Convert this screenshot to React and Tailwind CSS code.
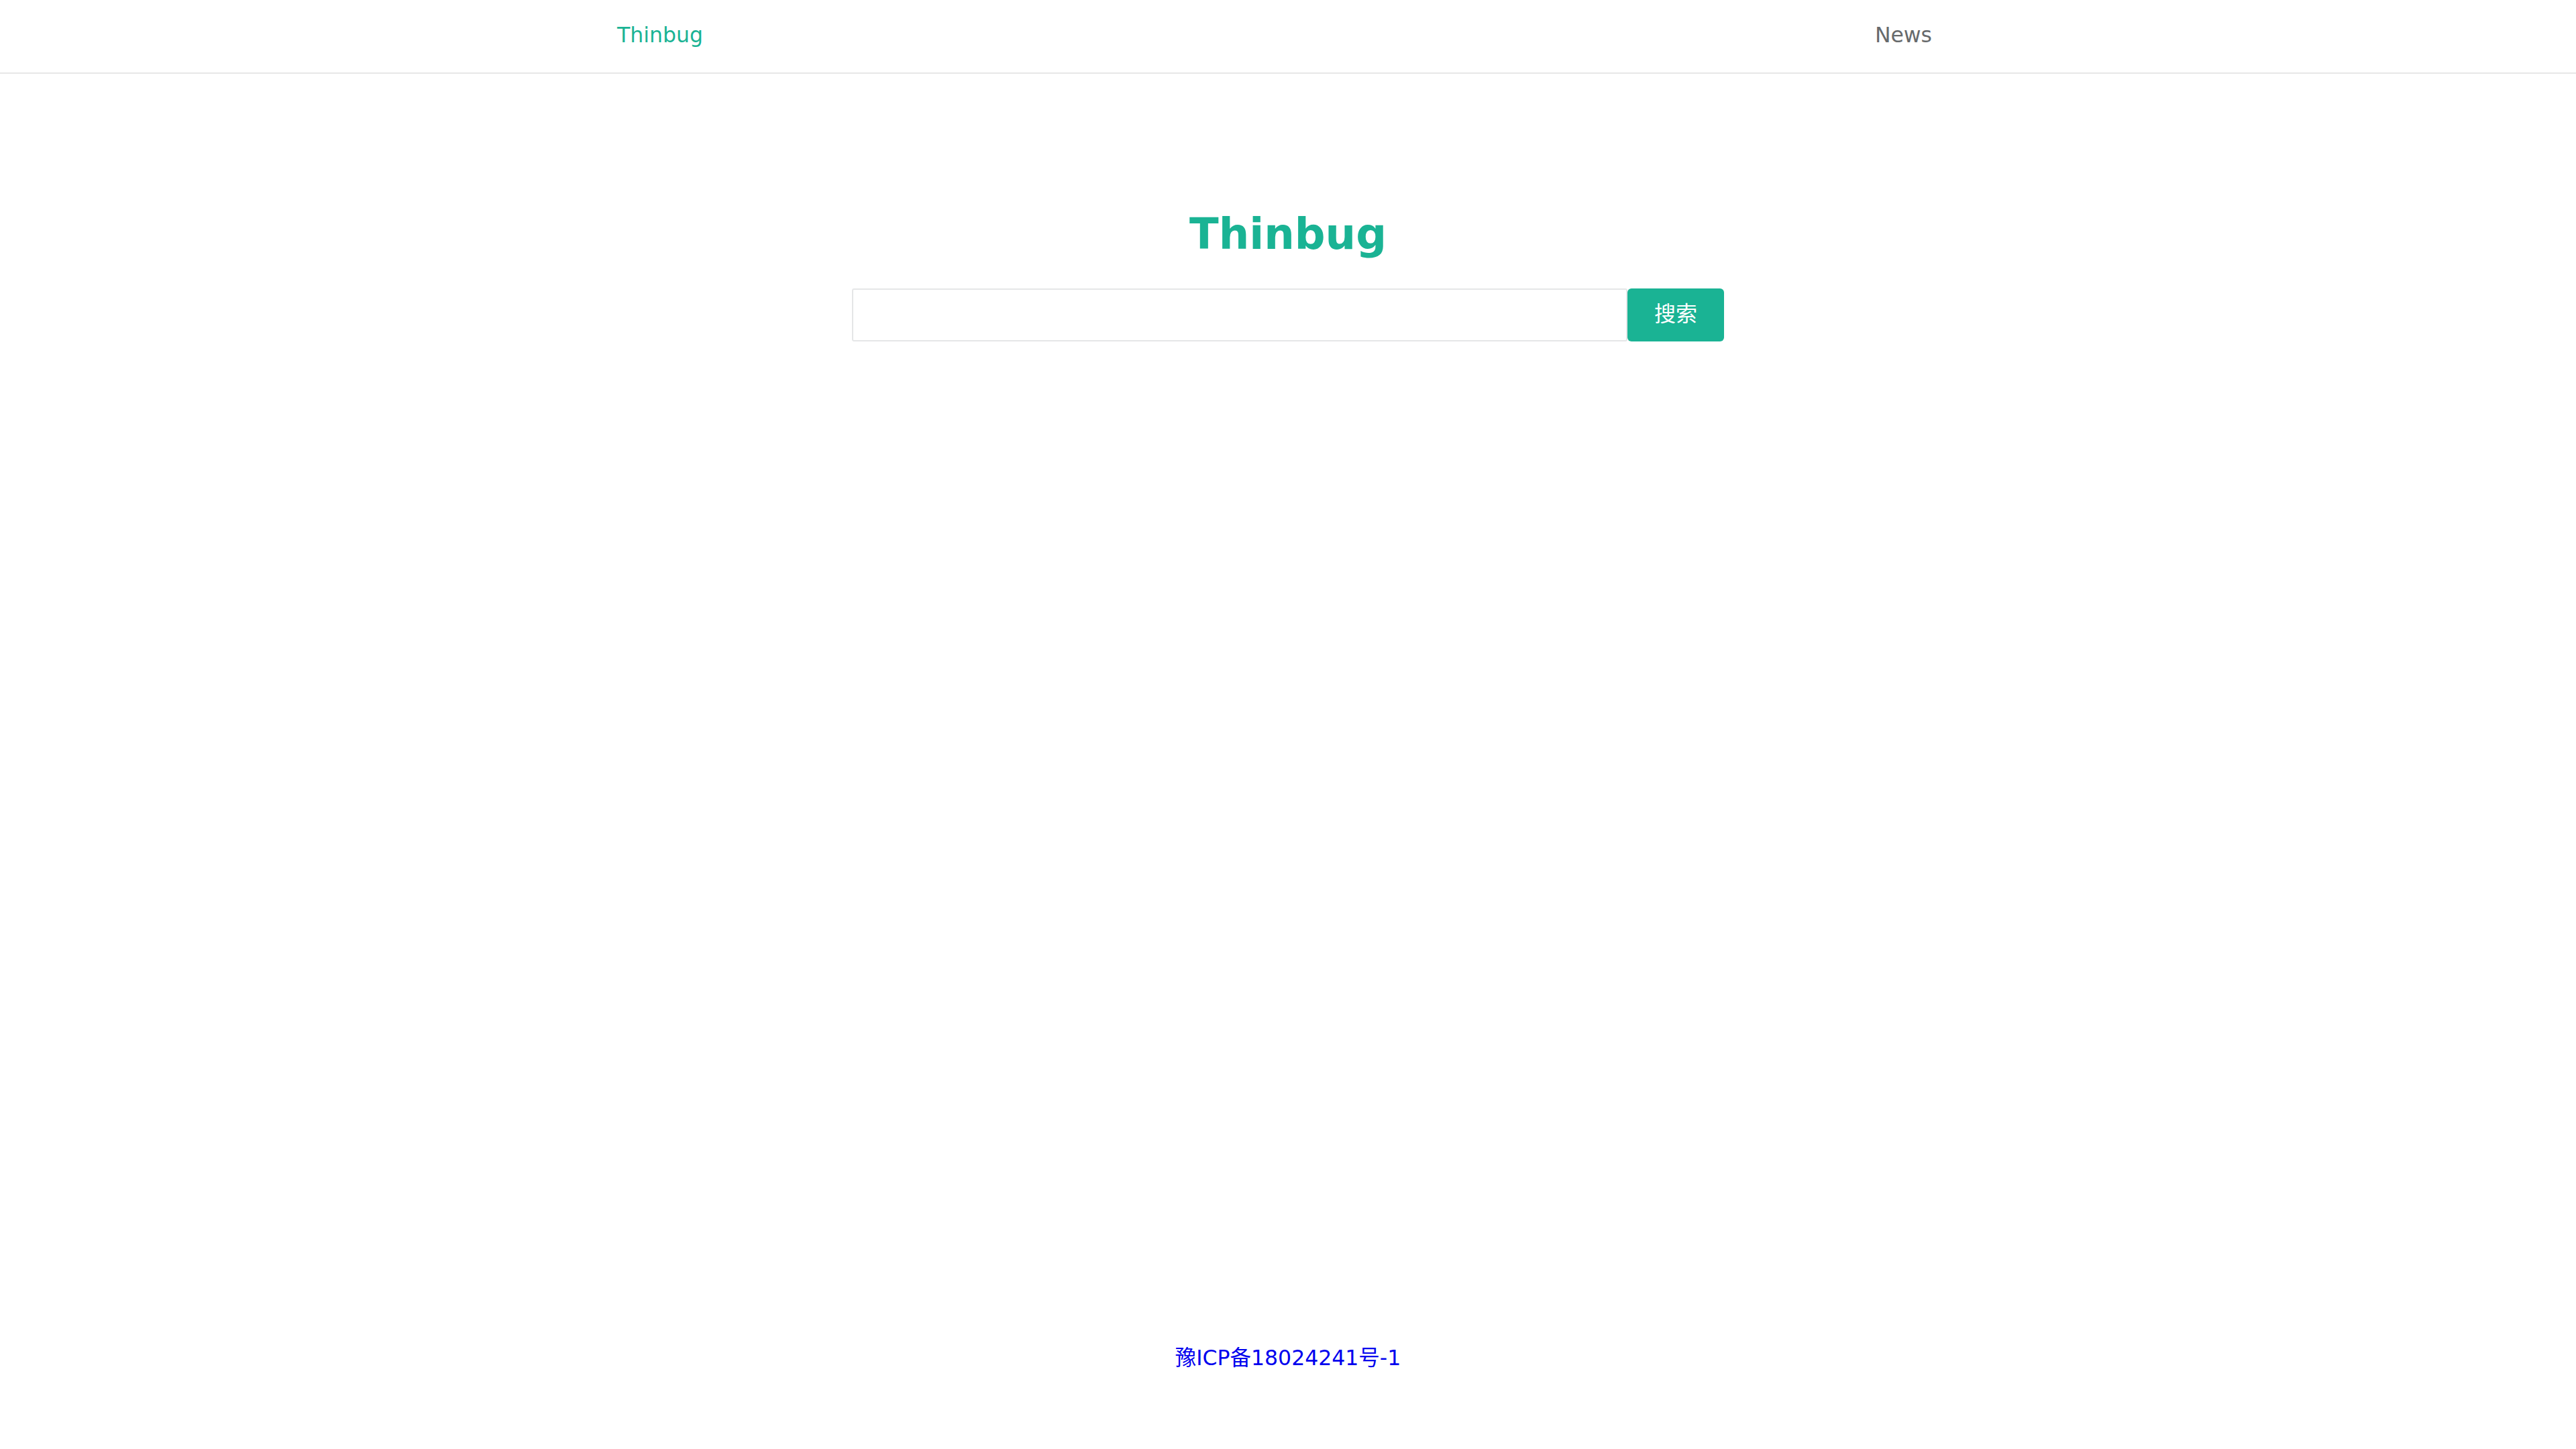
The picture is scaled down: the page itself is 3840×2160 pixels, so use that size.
import React from "react";

export default function App() {
  return (
    <div className="min-h-screen w-full bg-white flex flex-col font-['DejaVu_Sans','Noto_Sans_CJK_SC',sans-serif]">
      <header className="h-[110px] border-b-2 border-[#e7e7e7] flex items-center pb-[2px]">
        <div className="w-full flex items-center justify-between pl-[920px] pr-[960px] text-[31.5px]">
          <a className="text-[#1ab394]">Thinbug</a>
          <a className="text-[#676a6c]">News</a>
        </div>
      </header>
      <main className="flex flex-col items-center pt-[194px]">
        <h1 className="font-bold text-[64px] leading-[90px] text-[#1ab394]">Thinbug</h1>
        <div className="flex mt-[36px]">
          <input className="w-[1156px] h-[79px] border-2 border-[#e5e6e7] rounded-[3px] outline-none px-4 text-[32px]" />
          <button className="w-[144px] h-[79px] bg-[#1ab394] text-white rounded-[6px] text-[32px] leading-none pb-1">搜索</button>
        </div>
      </main>
      <footer className="mt-auto mb-[112px] flex justify-center">
        <a className="text-[#0000ee] text-[31.5px]">豫ICP备18024241号-1</a>
      </footer>
    </div>
  );
}
